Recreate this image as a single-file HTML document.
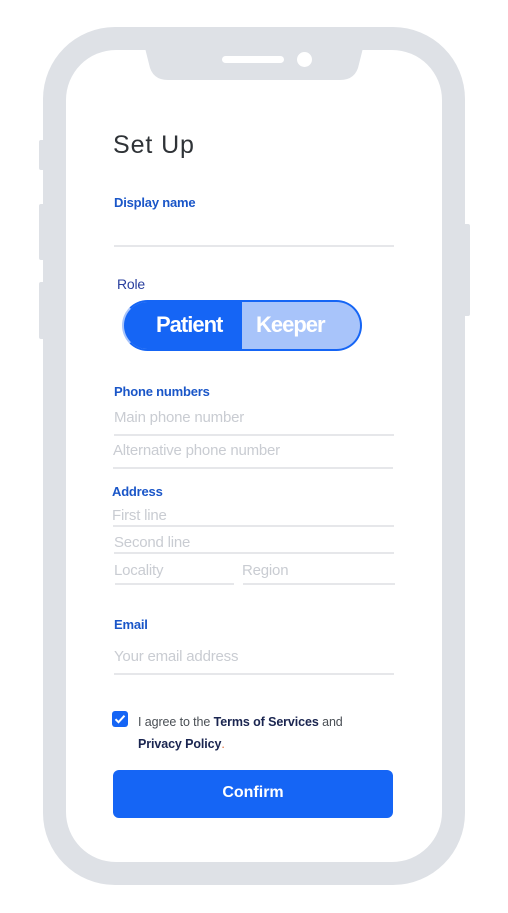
<!DOCTYPE html>
<html><head><meta charset="utf-8"><style>
*{margin:0;padding:0;box-sizing:border-box}
body{width:508px;height:913px;background:#fff;position:relative;overflow:hidden;font-family:"Liberation Sans",sans-serif}
.a{position:absolute}
.frame{left:43px;top:27px;width:422px;height:858px;background:#dee1e6;border-radius:72px}
.screen{left:66px;top:50px;width:376px;height:812px;background:#fff;border-radius:50px}
.btn{background:#dee1e6;border-radius:2px}
.lbl{color:#1a56c8;font-size:13px;font-weight:bold;letter-spacing:-0.2px}
.ph{color:#c9ccd2;font-size:15px;letter-spacing:-0.2px}
.ln{height:2px;background:#e6e7ea}
</style></head><body>
<div class="a btn" style="left:39px;top:140px;width:6px;height:30px"></div>
<div class="a btn" style="left:39px;top:204px;width:6px;height:56px"></div>
<div class="a btn" style="left:39px;top:282px;width:6px;height:57px"></div>
<div class="a btn" style="left:463px;top:224px;width:7px;height:92px"></div>
<div class="a frame"></div>
<div class="a screen"></div>
<svg class="a" style="left:145px;top:48px" width="218" height="33" viewBox="0 0 218 33"><path d="M0 0 H218 L214 16 Q211 32 195 32 H23 Q7 32 4 16 Z" fill="#dee1e6"/></svg>
<div class="a" style="left:222px;top:56px;width:62px;height:7px;background:#fff;border-radius:4px"></div>
<div class="a" style="left:297px;top:52px;width:15px;height:15px;background:#fff;border-radius:50%"></div>

<div class="a" style="left:113px;top:131px;font-size:25px;color:#2f3337;letter-spacing:0.9px">Set Up</div>
<div class="a lbl" style="left:114px;top:195px">Display name</div>
<div class="a ln" style="left:114px;top:245px;width:280px"></div>

<div class="a lbl" style="left:117px;top:276px;color:#2a3f9e;font-weight:normal;font-size:14px">Role</div>
<div class="a" style="left:122px;top:300px;width:240px;height:51px;border-radius:26px;overflow:hidden;border:2px solid #1565f5;border-left-color:#a8c4fa;background:#a8c4fa">
  <div class="a" style="left:0;top:0;width:118px;height:47px;background:#1565f5"></div>
  <div class="a" style="left:32px;top:10px;color:#fff;font-size:22px;font-weight:bold;letter-spacing:-1px">Patient</div>
  <div class="a" style="left:132px;top:10px;color:#fff;font-size:22px;font-weight:bold;letter-spacing:-1px">Keeper</div>
</div>

<div class="a lbl" style="left:114px;top:384px">Phone numbers</div>
<div class="a ph" style="left:114px;top:409px">Main phone number</div>
<div class="a ln" style="left:114px;top:434px;width:280px"></div>
<div class="a ph" style="left:113px;top:442px">Alternative phone number</div>
<div class="a ln" style="left:113px;top:467px;width:280px"></div>

<div class="a lbl" style="left:112px;top:484px">Address</div>
<div class="a ph" style="left:112px;top:507px">First line</div>
<div class="a ln" style="left:113px;top:525px;width:281px"></div>
<div class="a ph" style="left:114px;top:534px">Second line</div>
<div class="a ln" style="left:114px;top:552px;width:280px"></div>
<div class="a ph" style="left:114px;top:562px">Locality</div>
<div class="a ln" style="left:115px;top:583px;width:119px"></div>
<div class="a ph" style="left:242px;top:562px">Region</div>
<div class="a ln" style="left:243px;top:583px;width:152px"></div>

<div class="a lbl" style="left:114px;top:617px">Email</div>
<div class="a ph" style="left:114px;top:648px">Your email address</div>
<div class="a ln" style="left:114px;top:673px;width:280px"></div>

<div class="a" style="left:112px;top:711px;width:16px;height:16px;background:#1565f5;border-radius:3px">
<svg width="16" height="16" viewBox="0 0 16 16"><path d="M3.5 8.2l3 3 6-6.5" stroke="#fff" stroke-width="2" fill="none"/></svg></div>
<div class="a" style="left:138px;top:711px;font-size:12.5px;color:#4a4f55;line-height:22px;width:260px;letter-spacing:-0.1px">I agree to the <b style="color:#1a2550">Terms of Services</b> and<br><b style="color:#1a2550">Privacy Policy</b><span style="color:#e07040">.</span></div>

<div class="a" style="left:113px;top:770px;width:280px;height:48px;background:#1565f5;border-radius:6px;color:#fff;font-weight:bold;font-size:16px;text-align:center;line-height:46px">Confirm</div>
</body></html>
